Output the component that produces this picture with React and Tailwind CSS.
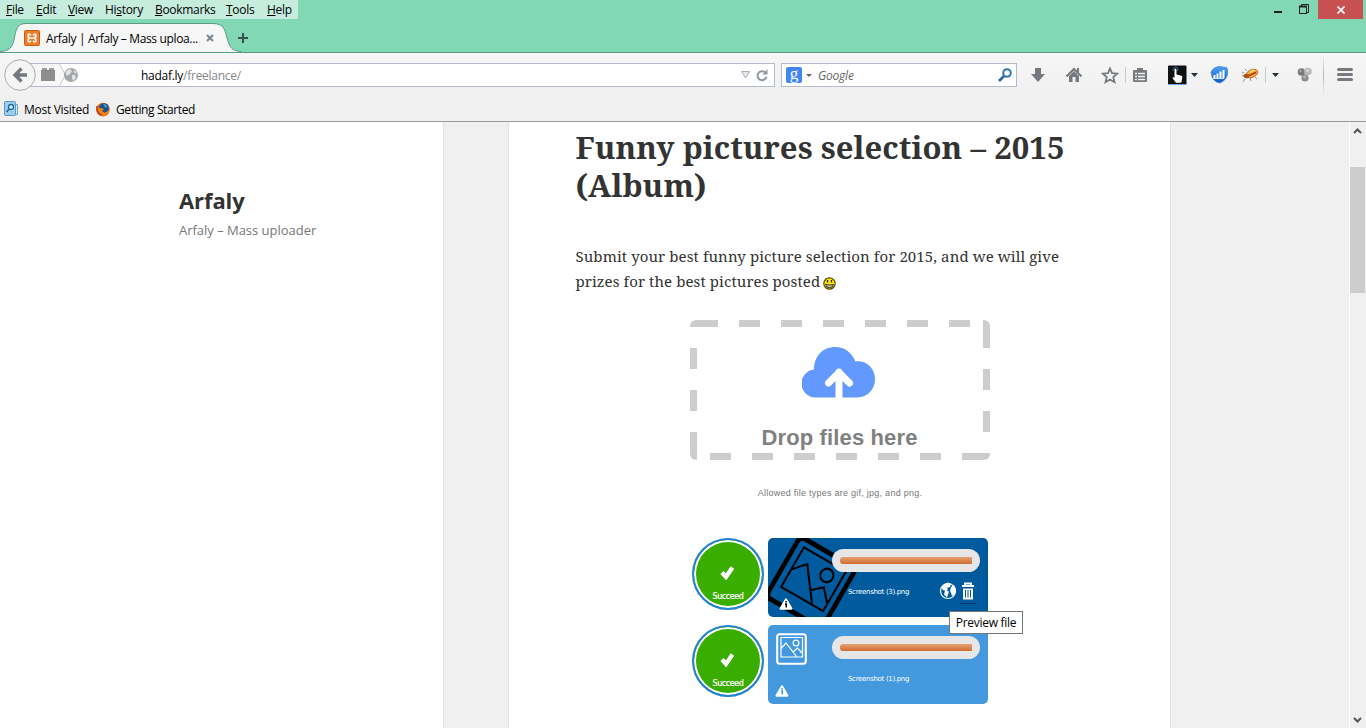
import React from "react";

const UI = "font-['Open_Sans','Noto_Sans',sans-serif]";

function Menu() {
  const items = [
    ["F", "ile", "w-[30px]"],
    ["E", "dit", "w-[32px]"],
    ["V", "iew", "w-[37px]"],
    ["Hi", "story", "w-[50px]"],
    ["B", "ookmarks", "w-[71px]"],
    ["T", "ools", "w-[41px]"],
    ["H", "elp", "w-[31px]"],
  ];
  return (
    <div className="flex h-5 w-[298px] items-center bg-[#c5ecdc] pl-[6px] text-[12px] tracking-[-0.3px] text-black">
      {items.map(([a, b, w]) => (
        <span key={a + b} className={`${w} mt-px shrink-0 whitespace-nowrap`}>
          {a === "Hi" ? (
            <>Hi<u>s</u>tory</>
          ) : (
            <><u>{a}</u>{b}</>
          )}
        </span>
      ))}
    </div>
  );
}

function Tab() {
  return (
    <div className="relative h-[29px] w-[300px]">
      <svg className="absolute inset-0" width="300" height="29">
        <path d="M0 28.500 C9 28 12 25 14 17 C16 6 17 .5 26 .5 H213 C223 .5 225 6 227 15 C230 25 232 28 241 28.500 V30 H0Z" fill="#f6f6f6" stroke="#5b9b83" />
      </svg>
      <div className="relative flex h-full items-center pt-px pl-6">
        <svg width="16" height="16" viewBox="0 0 16 16" className="shrink-0">
          <rect x=".5" y=".5" width="15" height="15" rx="1" fill="#f47b27" stroke="#c95d12" />
          <path d="M7 5.200Q4 3 4 5.500Q4 7 5.500 8Q4 9 4 10.500Q4 13 7 10.800M9 5.200Q12 3 12 5.500Q12 7 10.500 8Q12 9 12 10.500Q12 13 9 10.800M6.500 8h3" fill="none" stroke="#fff" strokeWidth="1.600" />
        </svg>
        <span className="mt-px ml-[6px] w-[160px] whitespace-nowrap text-[12px] tracking-[-0.35px] text-black">Arfaly | Arfaly – Mass uploa...</span>
        <svg width="8" height="8" viewBox="0 0 8 8"><path d="M1 1l6 6M7 1L1 7" stroke="#808890" strokeWidth="2.200" /></svg>
        <svg width="12" height="12" viewBox="0 0 12 12" className="ml-[23px]"><path d="M6 1v10M1 6h10" stroke="#3d4d50" strokeWidth="2" /></svg>
      </div>
    </div>
  );
}

function TitleBar() {
  return (
    <div className="flex h-[53px] justify-between border-b border-[#5b9b83] bg-[#82d8b4]">
      <div className="flex flex-col">
        <Menu />
        <div className="mt-[4px]"><Tab /></div>
      </div>
      <div className="flex h-[19px]">
        <svg width="48" height="19" className="shrink-0">
          <path d="M4 12h8" stroke="#222" strokeWidth="2" />
          <path d="M31.500 6v-1.500h7v8h-2" fill="none" stroke="#222" />
          <path d="M29 6.500h8" stroke="#222" strokeWidth="2" />
          <rect x="29.500" y="6.500" width="7" height="7" fill="none" stroke="#222" />
        </svg>
        <div className="mr-[3px] flex w-[45px] items-center justify-center bg-[#c75050]">
          <svg width="8" height="8" viewBox="0 0 8 8"><path d="M.5.5l7 7M7.500.5l-7 7" stroke="#fff" strokeWidth="1.700" /></svg>
        </div>
      </div>
    </div>
  );
}

function ToolIcons() {
  return (
    <svg width="349" height="44" viewBox="1017 53 349 44" className="shrink-0">
      <defs>
        <linearGradient id="sep" x1="0" x2="0" y1="0" y2="1">
          <stop offset="0" stopColor="#b5bdc8" stopOpacity="0" />
          <stop offset=".5" stopColor="#aab2bf" />
          <stop offset="1" stopColor="#b5bdc8" stopOpacity="0" />
        </linearGradient>
        <linearGradient id="orb" x1="0" x2="0" y1="0" y2="1">
          <stop offset="0" stopColor="#4da3f0" />
          <stop offset="1" stopColor="#0c57c8" />
        </linearGradient>
      </defs>
      <path d="M1035 68h6v6h4l-7 8-7-8h4z" fill="#75797d" />
      <path d="M1066.500 76.500l7.500-7.500 7.500 7.500" fill="none" stroke="#75797d" strokeWidth="2" />
      <path d="M1077 68h2v4h-2zM1069 76l5-5 5 5v6h-3.500v-5h-3v5h-3.500z" fill="#75797d" />
      <path d="M1110 68.500l2 4.600 5.200.5-3.900 3.500 1.200 5.100-4.500-2.700-4.500 2.700 1.200-5.100-3.900-3.500 5.200-.5z" fill="none" stroke="#75797d" strokeWidth="1.800" />
      <path d="M1125.500 67v16M1265.500 67v16" stroke="#c9cbcd" />
      <path d="M1137 68h6v2h3q1 0 1 1v10q0 1-1 1h-12q-1 0-1-1v-10q0-1 1-1h3z" fill="#75797d" />
      <path d="M1135 73.500h2M1138 73.500h7M1135 76.500h2M1138 76.500h7M1135 79.500h2M1138 79.500h7" stroke="#f2f2f2" strokeWidth="1.500" />
      <rect x="1168" y="65.500" width="18.500" height="19" rx="1" fill="#101112" />
      <path d="M1168 84.500h18.500" stroke="#6da4e0" />
      <path d="M1174.500 69q1.500-1 2 .5v5l5 1.200q1 .4.800 2l-.8 4.300-1 .8h-4.500l-3.500-4.500.5-1.300 1.500 1z" fill="#fff" />
      <path d="M1173.500 71a2.500 2.500 0 1 1 4 0" fill="none" stroke="#2b6d8c" />
      <path d="M1191 73h7l-3.500 4zM1272 73h7l-3.500 4z" fill="#26313c" />
      <path d="M1211 72.500q1.500-5 8-6l7.500 1q1.500 1.500 1.200 5.500-.7 7-7.700 10-8-1-9-10.500z" fill="url(#orb)" stroke="#4a86d0" strokeWidth=".8" />
      <path d="M1214.500 75v3M1217.500 73.500v5M1220.500 71.500v7M1223.500 70v8" stroke="#fff" strokeWidth="2" />
      <path d="M1213 78.500h11" stroke="#cfe4fb" />
      <path d="M1244 73l-2-1M1247 71l-2-2M1245 79l-2 3M1250 78l1 3M1255 77l2 2M1242 76l3-1" stroke="#8b8176" strokeWidth=".9" />
      <ellipse cx="1252" cy="73.500" rx="6" ry="3.800" transform="rotate(-24 1252 73.500)" fill="#f2b12c" stroke="#c9501a" strokeWidth=".8" />
      <ellipse cx="1246.500" cy="76" rx="2.800" ry="2.300" fill="#a8591a" />
      <path d="M1249 75.500l7-3" stroke="#b5300c" strokeWidth="1.600" />
      <path d="M1250 72l4-2" stroke="#ffe27a" strokeWidth="1.500" />
      <circle cx="1301.500" cy="72" r="3.800" fill="#77797a" />
      <circle cx="1308" cy="71.500" r="3.800" fill="#b9babb" />
      <circle cx="1305" cy="78" r="3.600" fill="#8b8d8e" />
      <circle cx="1300.500" cy="71" r="1.300" fill="#a2a4a5" />
      <circle cx="1307.500" cy="70.500" r="1.500" fill="#dadada" />
      <circle cx="1304.500" cy="77" r="1.300" fill="#bbb" />
      <rect x="1323" y="54" width="1" height="42" fill="url(#sep)" />
      <path d="M1338.500 69.500h13M1338.500 74.500h13M1338.500 79.500h13" stroke="#75797d" strokeWidth="3" strokeLinecap="round" />
    </svg>
  );
}

function NavBar() {
  return (
    <div className="flex h-11 items-center bg-linear-to-b from-[#f6f6f6] to-[#f0f0f0]">
      <svg width="36" height="44" className="relative z-10 ml-1 -mr-[8px] shrink-0">
        <circle cx="16" cy="22" r="15.300" fill="#f5f5f5" stroke="#a9abae" />
        <path d="M23 22H13M17.500 15.500L11 22l6.500 6.500" fill="none" stroke="#75797d" strokeWidth="3.400" />
      </svg>
      <div className="-ml-[4px] flex h-6 w-[747px] shrink-0 items-center border border-[#b4bcc9] bg-white">
        <svg width="58" height="22" className="shrink-0">
          <path d="M0 0h30l6 11-6 11H0z" fill="#f7f7f7" />
          <path d="M30.500 0l6 11-6 11" fill="none" stroke="#c5c8cc" />
          <path d="M13 4h5v2h-5zM20 4h5v2h-5z" fill="#9b9d9f" />
          <path d="M12 7h14v10H12z" fill="#8c8e90" />
          <path d="M12 6.500h14" stroke="#7e8082" />
          <circle cx="42" cy="11" r="7" fill="#a4a6a8" />
          <path d="M37 7l4-2 2 2-2 3-3 2-1-2zM43 11l3 0 1 3-3 3-1-3zM45 6l3 2-2 2-1-2z" fill="#e1e2e3" />
        </svg>
        <div className="mt-[2px] ml-[54px] grow text-[12px] tracking-[-0.27px] text-[#888] [&>b]:font-normal [&>b]:text-black"><b>hadaf.ly</b>/freelance/</div>
        <svg width="33" height="22" className="shrink-0">
          <path d="M.5 7.500h8l-4 6.500z" fill="#e5e8ec" stroke="#a8b0bb" />
          <path d="M24 8.200a4.500 4.500 0 1 0 1.500 4.500" fill="none" stroke="#8f98a3" strokeWidth="2" />
          <path d="M21.500 10.500h5V5z" fill="#8f98a3" />
        </svg>
      </div>
      <div className="ml-[6px] flex h-6 w-[236px] shrink-0 items-center border border-[#b4bcc9] bg-white pl-1">
        <div className="flex size-4 items-center justify-center rounded-[2px] bg-[#4285f4] pb-1 font-['Liberation_Serif',serif] text-[17px] leading-none text-white">g</div>
        <svg width="6" height="3" className="ml-1"><path d="M0 0h6L3 3z" fill="#666" /></svg>
        <span className="mt-[2px] ml-[6px] grow text-[12px] tracking-[-0.2px] text-[#666] italic">Google</span>
        <svg width="14" height="14" viewBox="0 0 14 14" className="mr-[4px] -mt-px">
          <circle cx="9" cy="5" r="3.800" fill="none" stroke="#2f75ad" strokeWidth="2" />
          <path d="M6 8l-5 5" stroke="#2d659d" strokeWidth="2.600" />
        </svg>
      </div>
      <ToolIcons />
    </div>
  );
}

function Bookmarks() {
  return (
    <div className="flex h-[25px] items-center border-b border-[#9a9a9a] bg-[#f0f0f0] pl-[4px] text-[12px] tracking-[-0.28px] text-black">
      <svg width="15" height="16" className="shrink-0">
        <path d="M11 3.500h2.500v10H11" fill="#d5e9f6" stroke="#6ca6cf" />
        <rect x=".5" y=".5" width="11" height="14" rx="1" fill="#9fcdea" stroke="#5a98c5" />
        <circle cx="7" cy="6" r="2.500" fill="#d8effc" stroke="#24679b" strokeWidth="1.300" />
        <path d="M5 8l-2.500 3" stroke="#24679b" strokeWidth="1.600" />
      </svg>
      <span className="mt-[2px] ml-[5px] w-[72px] whitespace-nowrap">Most Visited</span>
      <svg width="14" height="15" className="shrink-0">
        <circle cx="7" cy="7.500" r="6.800" fill="#e66a14" />
        <circle cx="8" cy="6" r="4.800" fill="#17518f" />
        <path d="M.5 5Q2 7 5 6l3 1-2 2 3 2 4-3q0 6-6 6.500Q.5 14 .5 5z" fill="#ef8216" />
        <path d="M1 4q-1 8 5 9" fill="none" stroke="#c6381a" strokeWidth="1.500" />
        <path d="M7 2q4 0 4 4l-2-1z" fill="#4aa6de" />
      </svg>
      <span className="mt-[2px] ml-[6px] tracking-[-0.39px] whitespace-nowrap">Getting Started</span>
    </div>
  );
}

function Photo({ className, thin }) {
  return (
    <svg viewBox="0 0 31 32" preserveAspectRatio="none" className={className} fill="none" stroke="currentColor">
      <rect x="1.200" y="1.200" width="28.600" height="29.600" rx="2.500" strokeWidth="2.100" />
      <path d="M5 4.500h21.500v19.500H5zM5 15.500l5-5.500L20.500 23.500M17 19l4.500-4 5 5.500" strokeWidth={thin ? 0.9 : 1.2} />
      <circle cx="20" cy="10" r="2.900" strokeWidth={thin ? 0.9 : 1.2} />
    </svg>
  );
}

function Warning({ className }) {
  return (
    <svg width="14" height="12" viewBox="0 0 14 12" className={className}>
      <path d="M7 1.500L12.300 10.500H1.700z" fill="#fff" stroke="#fff" strokeWidth="2.400" strokeLinejoin="round" />
      <path d="M7 3v1.600M6 6h1.300v3.500" fill="none" stroke="currentColor" strokeWidth="1.500" />
    </svg>
  );
}

function Upload({ name, active }) {
  return (
    <div className="flex h-[79px] w-[296px] gap-[4px]">
      <div className="flex size-[72px] shrink-0 flex-col items-center rounded-full border-2 border-[#2482d4] bg-[#39ad00] pt-[25px] text-white shadow-[inset_0_0_0_2px_#fff]">
        <svg width="15" height="15" viewBox="0 0 15 15" className="-ml-px"><path d="M2 7.500l4 4.500L12.500 2.500" fill="none" stroke="#fff" strokeWidth="4.200" /></svg>
        <span className="mt-[11px] font-['DejaVu_Sans',sans-serif] text-[8px] leading-[12px] tracking-[-0.4px] [-webkit-text-stroke:0.2px_#fff]">Succeed</span>
      </div>
      <div className={`relative w-[220px] overflow-hidden rounded-[5px] ${active ? "bg-[#005a9e]" : "bg-[#4398de]"}`}>
        {active
          ? <Photo thin className="absolute top-[7px] left-[8px] h-[75px] w-[70px] rotate-[30deg] text-black" />
          : <Photo className="absolute top-[8px] left-[8px] h-8 w-[31px] text-white" />}
        <Warning className={active ? "absolute top-[60px] left-[11px] text-black" : "absolute top-[60px] left-[7px] text-[#4398de]"} />
        <div className="relative mt-[11px] ml-[64px] flex h-[23px] w-[148px] items-center rounded-full bg-[#e6e6e6] px-2">
          <div className="h-[7px] w-full rounded-l-[3px] rounded-r-[1px] bg-linear-to-b from-[#e5a071] to-[#cf6c2d]" />
        </div>
        <div className="relative ml-[80px] mt-[8px] flex h-[22px] items-center">
          <span className="mt-[2px] w-[92px] whitespace-nowrap font-['DejaVu_Sans',sans-serif] text-[7px] tracking-[-0.32px] text-white">{name}</span>
          {active && (
            <svg width="37" height="24" viewBox="0 0 37 24" className="mt-[2px] shrink-0">
              <circle cx="8" cy="11" r="7.500" fill="none" stroke="#fff" strokeWidth="1.200" />
              <path d="M1.500 8l2.500-3.500 4-2 3 1.500-1 3-3 1 1 2-2 1-3-1zM5 10.500l4 1-1 3-1 3-3-3zM11 7l3-2 2 5-1 4-3 2-1-3-1-2z" fill="#fff" />
              <path d="M22 6h12M25 5.500V3.500h6v2" fill="none" stroke="#fff" strokeWidth="1.800" />
              <path d="M23 8.500h10v11H23z" fill="#fff" />
              <path d="M25.500 10v7.500M28 10v7.500M30.500 10v7.500" stroke="#005a9e" />
              <path d="M20 23.500h16" stroke="#123a66" />
            </svg>
          )}
        </div>
      </div>
    </div>
  );
}

function DropZone() {
  return (
    <div className="relative flex h-[140px] w-[300px] flex-col items-center">
      <svg className="absolute inset-0" width="300" height="140">
        <defs><clipPath id="zone"><rect width="300" height="140" rx="6" /></clipPath></defs>
        <g clipPath="url(#zone)" fill="none" stroke="#cdcdcd" strokeWidth="7">
          <path d="M0 3.500H28" />
          <path d="M49 3.500H280" strokeDasharray="21 21" />
          <path d="M296.500 0V28" />
          <path d="M296.500 49V112" strokeDasharray="21 21" />
          <path d="M300 136.500H272" />
          <path d="M20 136.500H251" strokeDasharray="21 21" />
          <path d="M3.500 140V112" />
          <path d="M3.500 28V91" strokeDasharray="21 21" />
        </g>
      </svg>
      <svg width="74" height="52" viewBox="0 0 74 52" className="mt-[26px] mr-[2px]">
        <path d="M15 51.500A14 14 0 0 1 12 23.500C12 10 21 1 33 1C43 1 50 7 53.500 15.500C64 14 73 22 73 33C73 43 66 51.500 55 51.500Z" fill="#6399ff" />
        <path d="M37 54V26M26.500 37L37 26.500 47.500 37" fill="none" stroke="#fff" strokeWidth="7" strokeLinejoin="round" strokeLinecap="round" />
      </svg>
      <div className="mt-[26px] -ml-px font-['Liberation_Sans',sans-serif] text-[22px] leading-[27px] font-bold tracking-[0.13px] text-[#808080]">Drop files here</div>
    </div>
  );
}

function Smiley() {
  return (
    <svg width="13" height="13" viewBox="0 0 13 13" className="ml-[3px] inline-block align-[-3px]">
      <circle cx="6.500" cy="6.500" r="5.700" fill="#ffe600" stroke="#594f00" strokeWidth="1.200" />
      <path d="M4.500 3v2.500M8.500 3v2.500" stroke="#222" strokeWidth="1.300" />
      <path d="M2.500 7.500q4 1 8 0-.5 3.200-4 3.200t-4-3.200z" fill="#cfc9a0" stroke="#333" />
    </svg>
  );
}

function Article() {
  return (
    <main className="flex w-[663px] shrink-0 flex-col border-x border-[#e3e3e3] bg-white pr-[66px] pl-[67px]">
      <h1 className="mt-[6px] -ml-[0.5px] font-['Noto_Serif','DejaVu_Serif',serif] text-[31px] leading-[38px] font-bold tracking-[0.08px] whitespace-nowrap text-[#333]">Funny pictures selection – 2015<br />(Album)</h1>
      <p className="mt-[40px] -ml-[0.5px] font-['Noto_Serif','DejaVu_Serif',serif] text-[15px] leading-[25px] tracking-[0.09px] whitespace-nowrap text-[#333]">Submit your best funny picture selection for 2015, and we will give<br />prizes for the best pictures posted<Smiley /></p>
      <div className="mt-[26px] flex flex-col items-center">
        <DropZone />
        <div className="mt-[26px] font-['Liberation_Sans',sans-serif] text-[9px] leading-[14px] tracking-[0.25px] text-[#777]">Allowed file types are gif, jpg, and png.</div>
        <div className="mt-[38px] flex flex-col gap-2">
          <Upload name="Screenshot (3).png" active />
          <Upload name="Screenshot (1).png" />
        </div>
      </div>
    </main>
  );
}

function ScrollBar() {
  return (
    <div className="ml-auto flex w-[17px] flex-col items-center justify-between border-l border-white bg-[#f0f0f0]">
      <svg width="16" height="172">
        <path d="M4 11l3.500-3.500L11 11" fill="none" stroke="#555" strokeWidth="2" />
        <rect y="45" width="15" height="126" fill="#cdcdcd" />
      </svg>
      <svg width="16" height="17"><path d="M4 7l3.500 3.500L11 7" fill="none" stroke="#555" strokeWidth="2" /></svg>
    </div>
  );
}

export default function App() {
  return (
    <div className={`relative flex h-[728px] w-[1366px] flex-col overflow-hidden bg-white ${UI}`}>
      <TitleBar />
      <NavBar />
      <Bookmarks />
      <div className="flex min-h-0 grow overflow-hidden bg-[#f0f0f0]">
        <aside className="w-[444px] shrink-0 border-r border-[#e3e3e3] bg-white pt-[63px] pl-[179px]">
          <h2 className="text-[22px] leading-[30px] font-bold tracking-[-0.1px] text-[#333]">Arfaly</h2>
          <div className="mt-[5px] text-[13px] leading-5 tracking-[-0.02px] text-[#777]">Arfaly – Mass uploader</div>
        </aside>
        <div className="w-16 shrink-0" />
        <Article />
        <ScrollBar />
      </div>
      <div className="absolute top-[611px] left-[949px] flex h-[23px] w-[74px] items-center justify-center border border-[#767676] bg-white pt-px text-[12px] tracking-[-0.28px] whitespace-nowrap text-black">Preview file</div>
    </div>
  );
}
